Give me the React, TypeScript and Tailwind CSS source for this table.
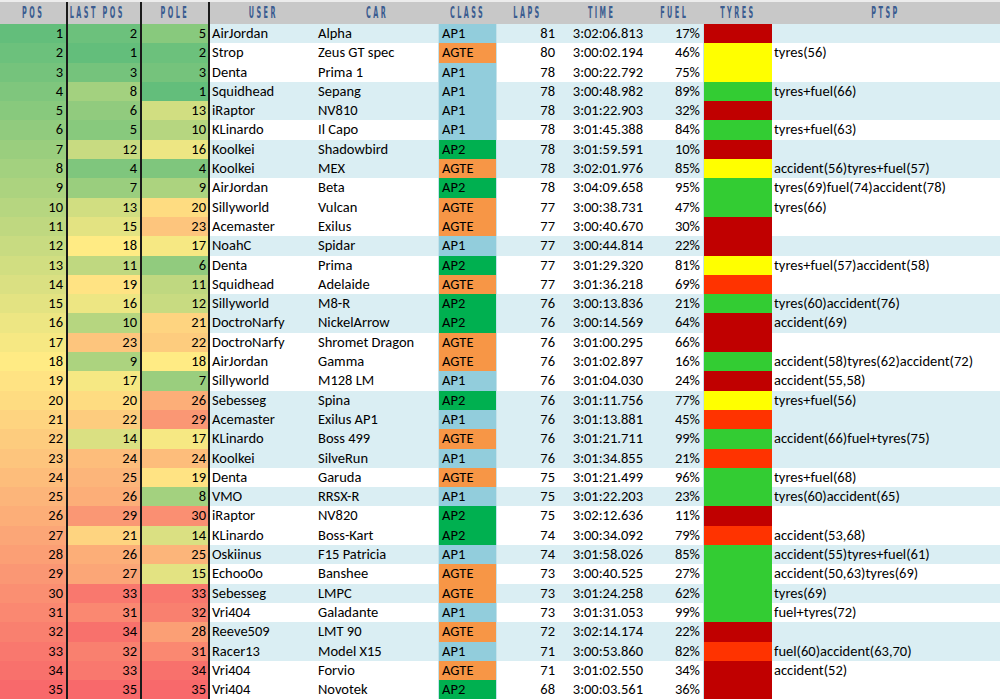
import React from 'react';

type Tyre = 'red' | 'yellow' | 'green' | 'orange';

interface Entry {
  pos: number;
  last: number;
  pole: number;
  user: string;
  car: string;
  cls: 'AP1' | 'AP2' | 'AGTE';
  laps: number;
  time: string;
  fuel: string;
  tyres: Tyre;
  ptsp: string;
  hl: boolean;
}

const rows: Entry[] = [
  { pos: 1, last: 2, pole: 5, user: 'AirJordan', car: 'Alpha', cls: 'AP1', laps: 81, time: '3:02:06.813', fuel: '17%', tyres: 'red', ptsp: '', hl: true },
  { pos: 2, last: 1, pole: 2, user: 'Strop', car: 'Zeus GT spec', cls: 'AGTE', laps: 80, time: '3:00:02.194', fuel: '46%', tyres: 'yellow', ptsp: 'tyres(56)', hl: false },
  { pos: 3, last: 3, pole: 3, user: 'Denta', car: 'Prima 1', cls: 'AP1', laps: 78, time: '3:00:22.792', fuel: '75%', tyres: 'yellow', ptsp: '', hl: false },
  { pos: 4, last: 8, pole: 1, user: 'Squidhead', car: 'Sepang', cls: 'AP1', laps: 78, time: '3:00:48.982', fuel: '89%', tyres: 'green', ptsp: 'tyres+fuel(66)', hl: true },
  { pos: 5, last: 6, pole: 13, user: 'iRaptor', car: 'NV810', cls: 'AP1', laps: 78, time: '3:01:22.903', fuel: '32%', tyres: 'red', ptsp: '', hl: true },
  { pos: 6, last: 5, pole: 10, user: 'KLinardo', car: 'Il Capo', cls: 'AP1', laps: 78, time: '3:01:45.388', fuel: '84%', tyres: 'green', ptsp: 'tyres+fuel(63)', hl: false },
  { pos: 7, last: 12, pole: 16, user: 'Koolkei', car: 'Shadowbird', cls: 'AP2', laps: 78, time: '3:01:59.591', fuel: '10%', tyres: 'red', ptsp: '', hl: true },
  { pos: 8, last: 4, pole: 4, user: 'Koolkei', car: 'MEX', cls: 'AGTE', laps: 78, time: '3:02:01.976', fuel: '85%', tyres: 'yellow', ptsp: 'accident(56)tyres+fuel(57)', hl: true },
  { pos: 9, last: 7, pole: 9, user: 'AirJordan', car: 'Beta', cls: 'AP2', laps: 78, time: '3:04:09.658', fuel: '95%', tyres: 'green', ptsp: 'tyres(69)fuel(74)accident(78)', hl: false },
  { pos: 10, last: 13, pole: 20, user: 'Sillyworld', car: 'Vulcan', cls: 'AGTE', laps: 77, time: '3:00:38.731', fuel: '47%', tyres: 'green', ptsp: 'tyres(66)', hl: false },
  { pos: 11, last: 15, pole: 23, user: 'Acemaster', car: 'Exilus', cls: 'AGTE', laps: 77, time: '3:00:40.670', fuel: '30%', tyres: 'red', ptsp: '', hl: false },
  { pos: 12, last: 18, pole: 17, user: 'NoahC', car: 'Spidar', cls: 'AP1', laps: 77, time: '3:00:44.814', fuel: '22%', tyres: 'red', ptsp: '', hl: true },
  { pos: 13, last: 11, pole: 6, user: 'Denta', car: 'Prima', cls: 'AP2', laps: 77, time: '3:01:29.320', fuel: '81%', tyres: 'yellow', ptsp: 'tyres+fuel(57)accident(58)', hl: false },
  { pos: 14, last: 19, pole: 11, user: 'Squidhead', car: 'Adelaide', cls: 'AGTE', laps: 77, time: '3:01:36.218', fuel: '69%', tyres: 'orange', ptsp: '', hl: false },
  { pos: 15, last: 16, pole: 12, user: 'Sillyworld', car: 'M8-R', cls: 'AP2', laps: 76, time: '3:00:13.836', fuel: '21%', tyres: 'green', ptsp: 'tyres(60)accident(76)', hl: true },
  { pos: 16, last: 10, pole: 21, user: 'DoctroNarfy', car: 'NickelArrow', cls: 'AP2', laps: 76, time: '3:00:14.569', fuel: '64%', tyres: 'red', ptsp: 'accident(69)', hl: true },
  { pos: 17, last: 23, pole: 22, user: 'DoctroNarfy', car: 'Shromet Dragon', cls: 'AGTE', laps: 76, time: '3:01:00.295', fuel: '66%', tyres: 'red', ptsp: '', hl: false },
  { pos: 18, last: 9, pole: 18, user: 'AirJordan', car: 'Gamma', cls: 'AGTE', laps: 76, time: '3:01:02.897', fuel: '16%', tyres: 'green', ptsp: 'accident(58)tyres(62)accident(72)', hl: false },
  { pos: 19, last: 17, pole: 7, user: 'Sillyworld', car: 'M128 LM', cls: 'AP1', laps: 76, time: '3:01:04.030', fuel: '24%', tyres: 'red', ptsp: 'accident(55,58)', hl: false },
  { pos: 20, last: 20, pole: 26, user: 'Sebesseg', car: 'Spina', cls: 'AP2', laps: 76, time: '3:01:11.756', fuel: '77%', tyres: 'yellow', ptsp: 'tyres+fuel(56)', hl: true },
  { pos: 21, last: 22, pole: 29, user: 'Acemaster', car: 'Exilus AP1', cls: 'AP1', laps: 76, time: '3:01:13.881', fuel: '45%', tyres: 'orange', ptsp: '', hl: true },
  { pos: 22, last: 14, pole: 17, user: 'KLinardo', car: 'Boss 499', cls: 'AGTE', laps: 76, time: '3:01:21.711', fuel: '99%', tyres: 'green', ptsp: 'accident(66)fuel+tyres(75)', hl: true },
  { pos: 23, last: 24, pole: 24, user: 'Koolkei', car: 'SilveRun', cls: 'AP1', laps: 76, time: '3:01:34.855', fuel: '21%', tyres: 'orange', ptsp: '', hl: true },
  { pos: 24, last: 25, pole: 19, user: 'Denta', car: 'Garuda', cls: 'AGTE', laps: 75, time: '3:01:21.499', fuel: '96%', tyres: 'green', ptsp: 'tyres+fuel(68)', hl: false },
  { pos: 25, last: 26, pole: 8, user: 'VMO', car: 'RRSX-R', cls: 'AP1', laps: 75, time: '3:01:22.203', fuel: '23%', tyres: 'green', ptsp: 'tyres(60)accident(65)', hl: true },
  { pos: 26, last: 29, pole: 30, user: 'iRaptor', car: 'NV820', cls: 'AP2', laps: 75, time: '3:02:12.636', fuel: '11%', tyres: 'red', ptsp: '', hl: false },
  { pos: 27, last: 21, pole: 14, user: 'KLinardo', car: 'Boss-Kart', cls: 'AP2', laps: 74, time: '3:00:34.092', fuel: '79%', tyres: 'orange', ptsp: 'accident(53,68)', hl: false },
  { pos: 28, last: 26, pole: 25, user: 'Oskiinus', car: 'F15 Patricia', cls: 'AP1', laps: 74, time: '3:01:58.026', fuel: '85%', tyres: 'green', ptsp: 'accident(55)tyres+fuel(61)', hl: true },
  { pos: 29, last: 27, pole: 15, user: 'Echoo0o', car: 'Banshee', cls: 'AGTE', laps: 73, time: '3:00:40.525', fuel: '27%', tyres: 'green', ptsp: 'accident(50,63)tyres(69)', hl: false },
  { pos: 30, last: 33, pole: 33, user: 'Sebesseg', car: 'LMPC', cls: 'AGTE', laps: 73, time: '3:01:24.258', fuel: '62%', tyres: 'green', ptsp: 'tyres(69)', hl: true },
  { pos: 31, last: 31, pole: 32, user: 'Vri404', car: 'Galadante', cls: 'AP1', laps: 73, time: '3:01:31.053', fuel: '99%', tyres: 'green', ptsp: 'fuel+tyres(72)', hl: false },
  { pos: 32, last: 34, pole: 28, user: 'Reeve509', car: 'LMT 90', cls: 'AGTE', laps: 72, time: '3:02:14.174', fuel: '22%', tyres: 'red', ptsp: '', hl: true },
  { pos: 33, last: 32, pole: 31, user: 'Racer13', car: 'Model X15', cls: 'AP1', laps: 71, time: '3:00:53.860', fuel: '82%', tyres: 'orange', ptsp: 'fuel(60)accident(63,70)', hl: true },
  { pos: 34, last: 33, pole: 34, user: 'Vri404', car: 'Forvio', cls: 'AGTE', laps: 71, time: '3:01:02.550', fuel: '34%', tyres: 'red', ptsp: 'accident(52)', hl: false },
  { pos: 35, last: 35, pole: 35, user: 'Vri404', car: 'Novotek', cls: 'AP2', laps: 68, time: '3:00:03.561', fuel: '36%', tyres: 'red', ptsp: '', hl: false },
];

const clsColor = {
  AP1: 'bg-[#92cddc]',
  AP2: 'bg-[#00b050]',
  AGTE: 'bg-[#f79646]',
};

const tyreColor = {
  red: 'bg-[#c00000]',
  yellow: 'bg-[#ffff00]',
  green: 'bg-[#33cc33]',
  orange: 'bg-[#ff3300]',
};

// excel style 3-colour scale: green -> yellow -> red
function scaleColor(v: number) {
  const g = [99, 190, 123];
  const y = [255, 235, 132];
  const r = [248, 105, 107];
  let a = g, b = y, t = (v - 1) / 17;
  if (v > 18) {
    a = y;
    b = r;
    t = (v - 18) / 17;
  }
  const c = a.map((x, i) => Math.round(x + (b[i] - x) * t));
  return `rgb(${c[0]}, ${c[1]}, ${c[2]})`;
}

const cols = 'grid grid-cols-[68px_74px_68px_106px_122px_59px_61px_88px_57px_69px_228px]';

function Head({ label, className = '' }: { label: string; className?: string }) {
  return (
    <div className={`flex items-center justify-center overflow-visible whitespace-nowrap ${className}`}>
      <span className="inline-block scale-x-[0.48] font-['DejaVu_Sans_Condensed','DejaVu_Sans',sans-serif] font-semibold text-[15px] leading-none tracking-[0.34em] text-[#3a5c90]">
        {label}
      </span>
    </div>
  );
}

export default function App() {
  return (
    <div className="w-[1000px] h-[700px] overflow-hidden bg-white font-['Carlito','Lato',sans-serif] text-[14.5px] text-black">
      <div className={`${cols} h-[24px] bg-[#c8c8c8] border-t-2 border-[#ececec]`}>
        <Head label="POS" className="border-r-2 border-[#1a1a1a]" />
        <Head label="LAST POS" className="border-r-2 border-[#1a1a1a] pr-[14px]" />
        <Head label="POLE" className="border-r-2 border-[#1a1a1a]" />
        <Head label="USER" />
        <Head label="CAR" />
        <Head label="CLASS" />
        <Head label="LAPS" />
        <Head label="TIME" />
        <Head label="FUEL" />
        <Head label="TYRES" />
        <Head label="PTSP" />
      </div>
      {rows.map((r) => {
        const bg = r.hl ? 'bg-[#daeef3]' : 'bg-white';
        return (
          <div key={r.pos} className={`${cols} h-[19.3px] leading-[19.3px] whitespace-nowrap`}>
            <div className="text-right pr-[3px] border-r-2 border-[#1a1a1a]" style={{ backgroundColor: scaleColor(r.pos) }}>
              {r.pos}
            </div>
            <div className="text-right pr-[3px] border-r-2 border-[#1a1a1a]" style={{ backgroundColor: scaleColor(r.last) }}>
              {r.last}
            </div>
            <div className="text-right pr-[2px] border-r-2 border-[#1a1a1a]" style={{ backgroundColor: scaleColor(r.pole) }}>
              {r.pole}
            </div>
            <div className={`${bg} pl-[2px]`}>{r.user}</div>
            <div className={`${bg} pl-[2px]`}>{r.car}</div>
            <div className={`${clsColor[r.cls]} pl-[3px] border-x border-[#c4e2ea]`}>{r.cls}</div>
            <div className={`${bg} text-right pr-[3px]`}>{r.laps}</div>
            <div className={`${bg} text-right pr-[3px]`}>{r.time}</div>
            <div className={`${bg} text-right pr-[3px]`}>{r.fuel}</div>
            <div className={`${tyreColor[r.tyres]} border-l border-[#c4e2ea]`} />
            <div className={`${bg} pl-[2px] overflow-hidden`}>{r.ptsp}</div>
          </div>
        );
      })}
    </div>
  );
}
